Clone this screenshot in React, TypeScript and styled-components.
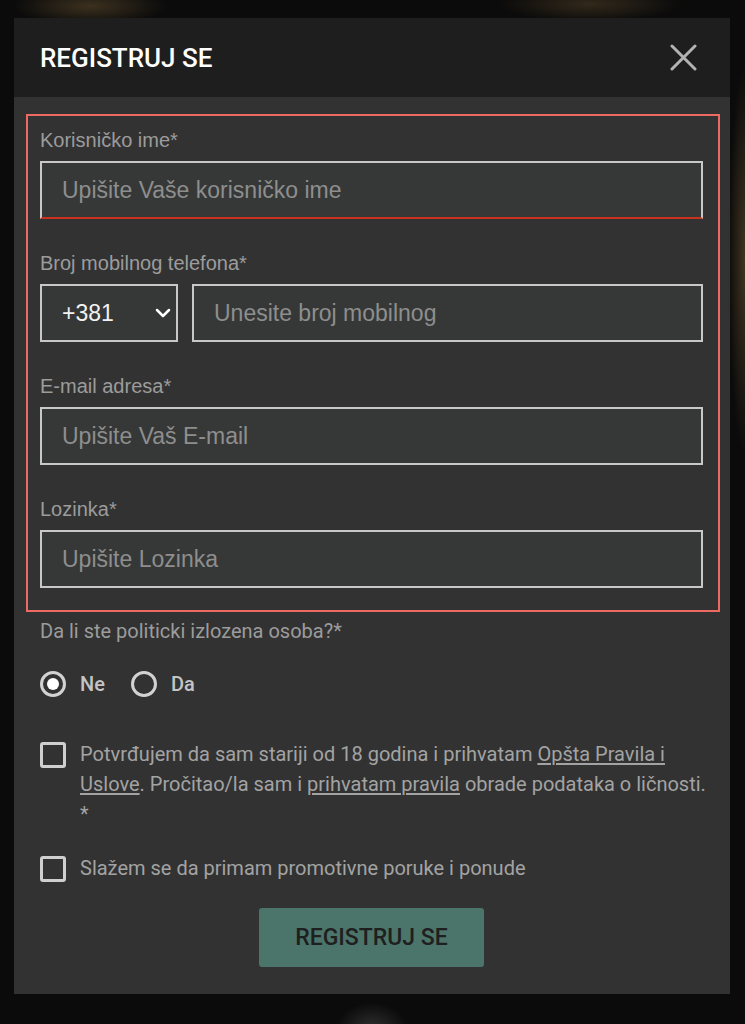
import React from "react";
import styled, { createGlobalStyle } from "styled-components";

const GlobalStyle = createGlobalStyle`
  html, body { margin: 0; padding: 0; }
  body {
    background: #0b0b0b;
    font-family: Roboto, "Liberation Sans", sans-serif;
  }
  * { box-sizing: border-box; }
`;

const Backdrop = styled.div`
  min-height: 1024px;
  padding: 18px 15px 0 14px;
  background:
    radial-gradient(ellipse 110px 28px at 90px 6px, rgba(120, 95, 55, 0.45), transparent 70%),
    radial-gradient(ellipse 130px 26px at 590px 4px, rgba(110, 85, 50, 0.4), transparent 70%),
    radial-gradient(ellipse 22px 260px at 745px 260px, rgba(95, 75, 45, 0.65), transparent 75%),
    radial-gradient(ellipse 45px 34px at 372px 1030px, rgba(120, 120, 120, 0.35), transparent 80%),
    #0b0b0b;
`;

const Modal = styled.div`
  width: 716px;
  background: #323232;
`;

const Header = styled.header`
  height: 79px;
  background: #1e1e1e;
  display: flex;
  align-items: center;
  justify-content: space-between;
  padding: 0 33px 0 26px;
`;

const Title = styled.h2`
  margin: 0;
  color: #ffffff;
  font-family: Roboto, sans-serif;
  font-weight: 500;
  font-size: 26px;
`;

const CloseButton = styled.button`
  width: 27px;
  height: 27px;
  padding: 0;
  border: none;
  background: transparent;
  display: flex;
  cursor: pointer;
`;

const Body = styled.div`
  padding: 17px 10px 27px 12px;
`;

const FormBox = styled.div`
  border: 2px solid #ec6a61;
  padding: 13px 15px 22px 12px;
  display: flex;
  flex-direction: column;
  gap: 33px;
`;

const Field = styled.div`
  display: flex;
  flex-direction: column;
`;

const Label = styled.label`
  font-family: "Liberation Sans", Arial, sans-serif;
  font-size: 20px;
  line-height: 22px;
  color: #9c9c9c;
  margin-bottom: 10px;
`;

const TextInput = styled.input<{ $error?: boolean }>`
  width: 100%;
  height: 58px;
  background: #363837;
  border: 2px solid #c8c8c8;
  border-bottom-color: ${(p) => (p.$error ? "#c9331d" : "#c8c8c8")};
  padding: 0 20px;
  font-family: "Liberation Sans", Arial, sans-serif;
  font-size: 23px;
  color: #ffffff;
  outline: none;
  &::placeholder { color: #8e8e8e; }
`;

const PhoneRow = styled.div`
  display: grid;
  grid-template-columns: 138px 1fr;
  gap: 14px;
`;

const SelectBox = styled.div`
  height: 58px;
  background: #363837;
  border: 2px solid #c8c8c8;
  display: flex;
  align-items: center;
  justify-content: space-between;
  padding: 0 5px 0 20px;
  font-family: "Liberation Sans", Arial, sans-serif;
  font-size: 23px;
  color: #f2f2f2;
`;

const Rest = styled.div`
  padding: 0 12px 0 14px;
  display: flex;
  flex-direction: column;
`;

const Question = styled.div`
  margin-top: 8px;
  font-size: 20px;
  line-height: 22px;
  color: #9c9c9c;
`;

const RadioRow = styled.div`
  margin-top: 27px;
  height: 30px;
  display: flex;
  align-items: center;
  gap: 26px;
`;

const RadioOption = styled.label`
  display: flex;
  align-items: center;
  gap: 14px;
  font-size: 20px;
  font-weight: 500;
  color: #c4c4c4;
`;

const RadioCircle = styled.span<{ $checked?: boolean }>`
  width: 26px;
  height: 26px;
  border-radius: 50%;
  border: 3px solid #d2d2d2;
  display: grid;
  place-items: center;
  &::after {
    content: "";
    width: 12px;
    height: 12px;
    border-radius: 50%;
    background: ${(p) => (p.$checked ? "#ffffff" : "transparent")};
  }
`;

const CheckRow = styled.div<{ $gap: number }>`
  margin-top: ${(p) => p.$gap}px;
  display: flex;
  align-items: flex-start;
  gap: 14px;
`;

const CheckBox = styled.span`
  flex: none;
  width: 26px;
  height: 26px;
  margin-top: 3px;
  border: 3px solid #cfcfcf;
  border-radius: 3px;
`;

const CheckText = styled.div`
  flex: 1;
  font-size: 20px;
  line-height: 30px;
  color: #a3a3a3;
`;

const TextLink = styled.a`
  color: inherit;
  text-decoration: underline;
  text-underline-offset: 2px;
`;

const ButtonRow = styled.div`
  margin-top: 25px;
  padding-right: 5px;
  display: flex;
  justify-content: center;
`;

const SubmitButton = styled.button`
  width: 225px;
  height: 59px;
  border: none;
  border-radius: 3px;
  background: #4b756a;
  color: #1f1f1f;
  font-family: Roboto, sans-serif;
  font-weight: 500;
  font-size: 23px;
  cursor: pointer;
`;

const CloseIcon = () => (
  <svg width="27" height="27" viewBox="0 0 27 27">
    <path d="M2 2 L25 25 M25 2 L2 25" stroke="#b3b3b3" strokeWidth="3" strokeLinecap="round" />
  </svg>
);

const Chevron = () => (
  <svg width="16" height="10" viewBox="0 0 16 10">
    <polyline points="2,2 8,8 14,2" fill="none" stroke="#ffffff" strokeWidth="2.5" strokeLinecap="round" strokeLinejoin="round" />
  </svg>
);

export default function App() {
  return (
    <>
      <GlobalStyle />
      <Backdrop>
        <Modal>
          <Header>
            <Title>REGISTRUJ SE</Title>
            <CloseButton aria-label="Zatvori">
              <CloseIcon />
            </CloseButton>
          </Header>
          <Body>
            <FormBox>
              <Field>
                <Label>Korisničko ime*</Label>
                <TextInput $error placeholder="Upišite Vaše korisničko ime" />
              </Field>
              <Field>
                <Label>Broj mobilnog telefona*</Label>
                <PhoneRow>
                  <SelectBox>
                    <span>+381</span>
                    <Chevron />
                  </SelectBox>
                  <TextInput placeholder="Unesite broj mobilnog" />
                </PhoneRow>
              </Field>
              <Field>
                <Label>E-mail adresa*</Label>
                <TextInput placeholder="Upišite Vaš E-mail" />
              </Field>
              <Field>
                <Label>Lozinka*</Label>
                <TextInput type="password" placeholder="Upišite Lozinka" />
              </Field>
            </FormBox>
            <Rest>
              <Question>Da li ste politicki izlozena osoba?*</Question>
              <RadioRow>
                <RadioOption>
                  <RadioCircle $checked />
                  Ne
                </RadioOption>
                <RadioOption>
                  <RadioCircle />
                  Da
                </RadioOption>
              </RadioRow>
              <CheckRow $gap={40}>
                <CheckBox />
                <CheckText>
                  Potvrđujem da sam stariji od 18 godina i prihvatam <TextLink>Opšta Pravila i Uslove</TextLink>. Pročitao/la sam i <TextLink>prihvatam pravila</TextLink> obrade podataka o ličnosti. *
                </CheckText>
              </CheckRow>
              <CheckRow $gap={24}>
                <CheckBox />
                <CheckText>Slažem se da primam promotivne poruke i ponude</CheckText>
              </CheckRow>
              <ButtonRow>
                <SubmitButton>REGISTRUJ SE</SubmitButton>
              </ButtonRow>
            </Rest>
          </Body>
        </Modal>
      </Backdrop>
    </>
  );
}
